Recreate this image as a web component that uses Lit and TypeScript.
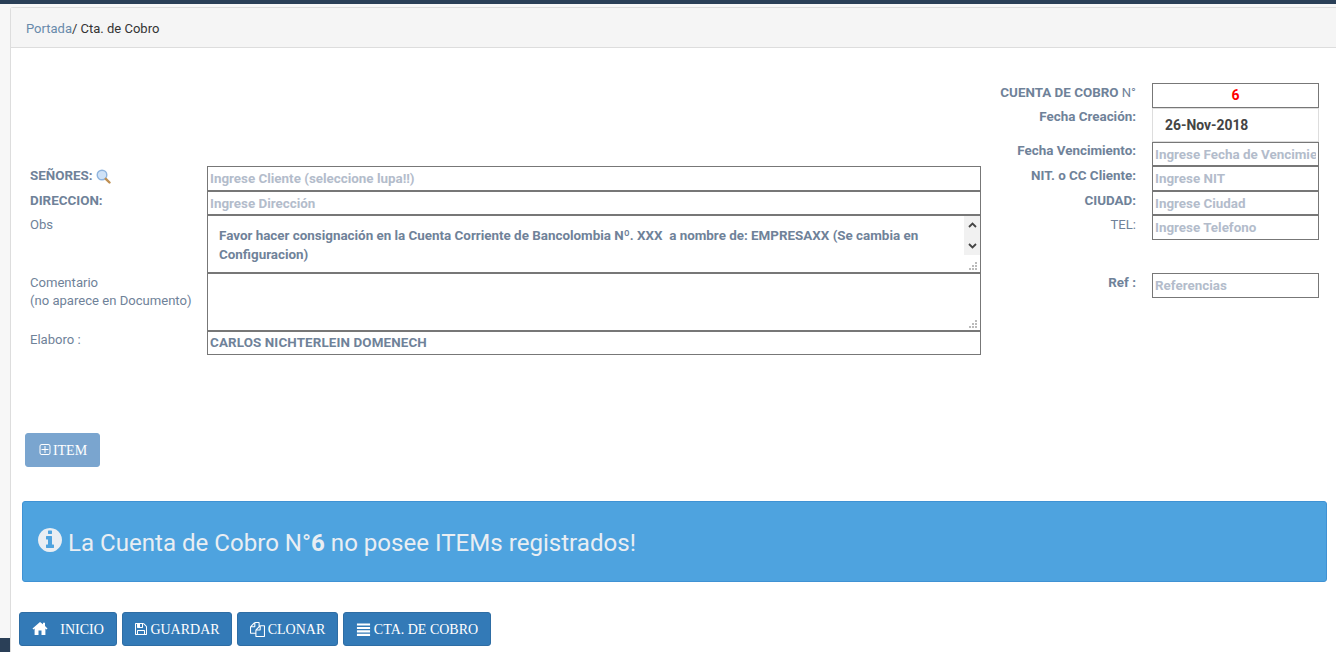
import { LitElement, html, css, svg } from "lit";
import { customElement } from "lit/decorators.js";

const ico = {
  home: svg`<path d="M8 1 .5 7.600l.9 1L2.600 7.600V14h3.900V9.600h3V14h3.900V7.600l1.200 1 .9-1L13 5V1.800h-2v1.400z"/>`,
  save: svg`<path d="M512 1536h768v-384h-768v384zm896 0h128v-896q0-14-10-38.500t-20-34.500l-281-281q-10-10-34.500-20t-38.500-10v416q0 40-28 68t-68 28h-576q-40 0-68-28t-28-68v-416h-128v1280h128v-416q0-40 28-68t68-28h832q40 0 68 28t28 68v416zm-384-928v-320q0-13-9.500-22.500t-22.500-9.500h-192q-13 0-22.500 9.500t-9.500 22.500v320q0 13 9.500 22.500t22.500 9.500h192q13 0 22.500-9.500t9.500-22.500zm640 32v928q0 40-28 68t-68 28h-1344q-40 0-68-28t-28-68v-1344q0-40 28-68t68-28h928q40 0 88 20t76 48l280 280q28 28 48 76t20 88z"/>`,
  clone: svg`<path d="M1696 384q40 0 68 28t28 68v1216q0 40-28 68t-68 28H736q-40 0-68-28t-28-68v-288H96q-40 0-68-28t-28-68V640q0-40 20-88t48-76L476 68q28-28 76-48t88-20h416q40 0 68 28t28 68v328q68-40 128-40h416zm-544 213L853 896h299V597zM512 213L213 512h299V213zm196 647l316-316V128H640v416q0 40-28 68t-68 28H128v640h512v-256q0-40 20-92t48-80zm956 804V512h-384v416q0 40-28 68t-68 28H768v640h896z"/>`,
  list: svg`<path d="M1 1.500h14v2.200H1zM1 5.200h14v2.200H1zM1 8.900h14v2.200H1zM1 12.600h14v2.200H1z"/>`,
  plus: svg`<path d="M1344 800v64q0 14-9 23t-23 9h-352v352q0 14-9 23t-23 9h-64q-14 0-23-9t-9-23v-352h-352q-14 0-23-9t-9-23v-64q0-14 9-23t23-9h352v-352q0-14 9-23t23-9h64q14 0 23 9t9 23v352h352q14 0 23 9t9 23zm128 448v-832q0-66-47-113t-113-47h-832q-66 0-113 47t-47 113v832q0 66 47 113t113 47h832q66 0 113-47t47-113zm128-832v832q0 119-84.500 203.500t-203.500 84.500h-832q-119 0-203.500-84.500t-84.500-203.500v-832q0-119 84.500-203.500t203.500-84.500h832q119 0 203.500 84.500t84.500 203.500z"/>`,
  info: svg`<path d="M1152 1376v-160q0-14-9-23t-23-9h-96v-512q0-14-9-23t-23-9h-320q-14 0-23 9t-9 23v160q0 14 9 23t23 9h96v320h-96q-14 0-23 9t-9 23v160q0 14 9 23t23 9h448q14 0 23-9t9-23zm-128-896v-160q0-14-9-23t-23-9h-192q-14 0-23 9t-9 23v160q0 14 9 23t23 9h192q14 0 23-9t9-23zm640 416q0 209-103 385.500t-279.500 279.500-385.500 103-385.500-103-279.500-279.500-103-385.500 103-385.500 279.500-279.500 385.500-103 385.500 103 279.500 279.500 103 385.500z"/>`,
};

const grip = html`<svg class="grip" width="8" height="8" viewBox="0 0 8 8"><path d="M6 0h2v2H6zM3 3h2v2H3zM6 3h2v2H6zM0 6h2v2H0zM3 6h2v2H3zM6 6h2v2H6z" fill="#bbb"/></svg>`;

@customElement("app-root")
export class AppRoot extends LitElement {
  static styles = css`
    :host { display: block; width: 1336px; height: 652px; overflow: hidden; background: #f7f7f7; font-family: Roboto, sans-serif; font-size: 13.08px; color: #6f8299; position: relative; }
    * { box-sizing: border-box; }
    .topbar { height: 4px; background: #2a3f57; }
    .panel { margin: 3px 0 0 10px; height: 645px; background: #fff; border: 1px solid #ddd; border-right: 0; border-bottom: 0; border-top-left-radius: 3px; }
    .crumb { height: 40px; background: #f5f5f5; border-bottom: 1px solid #ddd; padding: 12px 0 0 15px; color: #333; line-height: 18px; font-size: 13px; }
    .crumb span { color: #688aab; }
    .form { display: flex; padding: 35px 0 0 19px; height: 385px; }
    .left { width: 951px; padding-top: 83px; display: flex; flex-direction: column; }
    .row { display: grid; grid-template-columns: 177px 774px; }
    .lab { line-height: 18px; padding-top: 1px; }
    .lab.up { padding-top: 0; }
    .lab b { font-weight: 700; font-size: 13.4px; }
    .right { width: 339px; display: flex; flex-direction: column; }
    .rrow { display: grid; grid-template-columns: 155px 167px; column-gap: 16px; }
    .rrow .lab { text-align: right; }
    input, textarea { display: block; width: 100%; border: 1px solid #777; border-radius: 0; outline: 0; background: #fff; font: 700 13.4px Roboto, sans-serif; color: #6f8299; padding: 2px; margin: 0; }
    input { height: 25px; padding-top: 2px; }
    input::placeholder { color: #b3bccb; opacity: 1; }
    .h24 { height: 24px; }
    input.wide { letter-spacing: .12px; padding-top: 0; }
    .ta { position: relative; height: 58px; }
    textarea { height: 58px; padding: 10px 22px 0 11px; line-height: 19px; resize: none; overflow: hidden; }
    .sb { position: absolute; top: 1px; right: 1px; width: 16px; height: 39px; background: #f1f1f1; display: flex; flex-direction: column; justify-content: space-between; align-items: center; padding: 6px 0; }
    .sb svg { display: block; }
    .grip { position: absolute; right: 4px; bottom: 3px; display: block; }
    .num { height: 25px; border: 1px solid #777; text-align: center; color: #f00; font-weight: 700; font-size: 14px; line-height: 23px; }
    .date { height: 34px; border: 1px solid #ddd; color: #444; font-size: 13.9px; font-weight: 700; padding: 8px 0 0 12px; line-height: 17px; }
    .lupa { vertical-align: -4px; }
    .gap { height: 33px; }
    .btn { display: inline-flex; align-items: center; justify-content: center; height: 34px; padding: 0; border: 1px solid #2e6da4; border-radius: 3px; background: #337ab7; color: #fff; font: 14px "Liberation Serif", serif; }
    .btn span { padding-top: 2px; }
    .btn svg { fill: #fff; display: block; }
    .item { margin-left: 14px; width: 75px; background: #7aa5cf; border-color: #7aa5cf; gap: 1px; }
    .alert { margin: 34px 9px 0 11px; height: 81px; background: #4ea3df; border: 1px solid #3f92d4; border-radius: 3px; color: #e9eef3; font-size: 24.08px; display: flex; align-items: center; padding: 0 15px; gap: 4px; }
    .alert svg { fill: #e9eef3; margin: 0 0 3px -2px; display: block; }
    .alert span { padding-top: 2px; }
    .alert b { font-weight: 700; }
    .bar { display: flex; gap: 5px; margin: 30px 0 0 8px; }
    .w-inicio { width: 98px; gap: 12px; }
    .w-guardar { width: 110px; gap: 2px; }
    .w-clonar { width: 101px; gap: 3px; }
    .w-cta { width: 148px; gap: 3px; }
    .corner { position: absolute; left: 0; bottom: 0; width: 10px; height: 14px; background: #2a3f57; }
  `;

  render() {
    return html`
      <div class="topbar"></div>
      <div class="panel">
        <div class="crumb"><span>Portada</span>/ Cta. de Cobro</div>
        <div class="form">
          <div class="left">
            <div class="row">
              <div class="lab"><b>SEÑORES:</b>
                <svg class="lupa" width="15" height="15" viewBox="0 0 15 15"><circle cx="6" cy="6" r="4.800" fill="#cfe2f7" stroke="#8fb4de" stroke-width="1.400"/><path d="M9.800 9.800 13.500 13.500" stroke="#bf8f52" stroke-width="2.400" stroke-linecap="round"/></svg>
              </div>
              <input placeholder="Ingrese Cliente (seleccione lupa!!)" />
            </div>
            <div class="row"><div class="lab"><b>DIRECCION:</b></div><input class="h24" placeholder="Ingrese Dirección" /></div>
            <div class="row">
              <div class="lab">Obs</div>
              <div class="ta">
                <textarea .value=${"Favor hacer consignación en la Cuenta Corriente de Bancolombia Nº. XXX  a nombre de: EMPRESAXX (Se cambia en Configuracion)"}></textarea>
                <div class="sb">
                  <svg width="9" height="6" viewBox="0 0 9 6"><path d="M1 5l3.500-3.500L8 5" fill="none" stroke="#444" stroke-width="1.800"/></svg>
                  <svg width="9" height="6" viewBox="0 0 9 6"><path d="M1 1l3.500 3.500L8 1" fill="none" stroke="#444" stroke-width="1.800"/></svg>
                </div>
                ${grip}
              </div>
            </div>
            <div class="row">
              <div class="lab">Comentario<br />(no aparece en Documento)</div>
              <div class="ta"><textarea></textarea>${grip}</div>
            </div>
            <div class="row"><div class="lab up">Elaboro :</div><input class="h24 wide" .value=${"CARLOS NICHTERLEIN DOMENECH"} /></div>
          </div>
          <div class="right">
            <div class="rrow"><div class="lab"><b>CUENTA DE COBRO</b> N°</div><div class="num">6</div></div>
            <div class="rrow"><div class="lab up"><b>Fecha Creación:</b></div><div class="date">26-Nov-2018</div></div>
            <div class="rrow"><div class="lab up"><b>Fecha Vencimiento:</b></div><input class="h24" placeholder="Ingrese Fecha de Vencimiento" /></div>
            <div class="rrow"><div class="lab"><b>NIT. o CC Cliente:</b></div><input placeholder="Ingrese NIT" /></div>
            <div class="rrow"><div class="lab"><b>CIUDAD:</b></div><input class="h24" placeholder="Ingrese Ciudad" /></div>
            <div class="rrow"><div class="lab">TEL:</div><input placeholder="Ingrese Telefono" /></div>
            <div class="gap"></div>
            <div class="rrow"><div class="lab"><b>Ref :</b></div><input placeholder="Referencias" /></div>
          </div>
        </div>
        <button class="btn item">
          <svg width="14" height="14" viewBox="0 0 1792 1792">${ico.plus}</svg>
          <span>ITEM</span>
        </button>
        <div class="alert">
          <svg width="28" height="28" viewBox="0 0 1792 1792">${ico.info}</svg>
          <span>La Cuenta de Cobro N°<b>6</b> no posee ITEMs registrados!</span>
        </div>
        <div class="bar">
          <button class="btn w-inicio"><svg width="16" height="16" viewBox="0 0 16 16">${ico.home}</svg><span>INICIO</span></button>
          <button class="btn w-guardar"><svg width="14" height="14" viewBox="0 0 1792 1792">${ico.save}</svg><span>GUARDAR</span></button>
          <button class="btn w-clonar"><svg width="15" height="15" viewBox="0 0 1792 1792">${ico.clone}</svg><span>CLONAR</span></button>
          <button class="btn w-cta"><svg width="15" height="15" viewBox="0 0 16 16">${ico.list}</svg><span>CTA. DE COBRO</span></button>
        </div>
      </div>
      <div class="corner"></div>
    `;
  }
}
